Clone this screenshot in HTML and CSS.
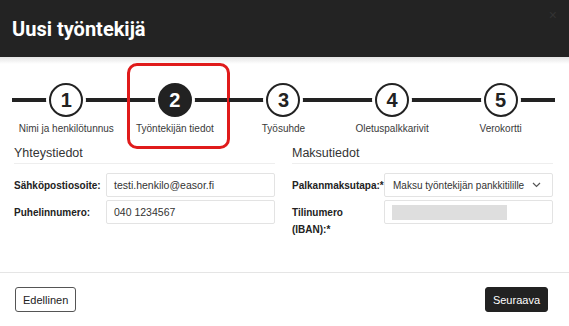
FILE: index.html
```html
<!DOCTYPE html>
<html lang="fi">
<head>
  <meta charset="UTF-8">
  <meta name="viewport" content="width=device-width, initial-scale=1.0">
  <title>Uusi työntekijä</title>
  <link rel="stylesheet" href="styles.css">
</head>
<body>
  <div class="modal">
    <div class="modal-header">
      <h2>Uusi työntekijä</h2>
      <span class="close">&times;</span>
    </div>

    <div class="modal-body">
      <ol class="stepper">
        <li class="step">
          <span class="circle">1</span>
          <span class="step-label">Nimi ja henkilötunnus</span>
        </li>
        <li class="step active">
          <span class="circle">2</span>
          <span class="step-label">Työntekijän tiedot</span>
        </li>
        <li class="step">
          <span class="circle">3</span>
          <span class="step-label">Työsuhde</span>
        </li>
        <li class="step">
          <span class="circle">4</span>
          <span class="step-label">Oletuspalkkarivit</span>
        </li>
        <li class="step">
          <span class="circle">5</span>
          <span class="step-label">Verokortti</span>
        </li>
      </ol>

      <div class="sections">
        <div class="section">
          <h3>Yhteystiedot</h3>
          <div class="row">
            <label>Sähköpostiosoite:</label>
            <div class="field">testi.henkilo@easor.fi</div>
          </div>
          <div class="row">
            <label>Puhelinnumero:</label>
            <div class="field">040 1234567</div>
          </div>
        </div>

        <div class="section">
          <h3>Maksutiedot</h3>
          <div class="row">
            <label>Palkanmaksutapa:*</label>
            <div class="field select">
              <span>Maksu työntekijän pankkitilille</span>
              <svg width="9" height="6" viewBox="0 0 9 6"><path d="M1 1l3.5 3.5L8 1" fill="none" stroke="#555" stroke-width="1.2"/></svg>
            </div>
          </div>
          <div class="row">
            <label>Tilinumero<br>(IBAN):*</label>
            <div class="field"><span class="hidden-value"></span></div>
          </div>
        </div>
      </div>
    </div>

    <div class="modal-footer">
      <button class="btn">Edellinen</button>
      <button class="btn btn-dark">Seuraava</button>
    </div>
  </div>
</body>
</html>
```

FILE: styles.css
```css
body {
  margin: 0;
  padding: 0;
  background: #fff;
  font-family: "Liberation Sans", Arial, sans-serif;
  color: #333;
}

.modal {
  width: 569px;
  height: 326px;
  overflow: hidden;
}

.modal-header {
  height: 57px;
  background: #232323;
  display: flex;
  align-items: center;
  justify-content: space-between;
  padding: 0 12px;
}

.modal-header h2 {
  margin: 0;
  margin-top: 1px;
  font-family: Roboto, sans-serif;
  font-weight: 700;
  font-size: 20px;
  color: #fff;
}

.modal-header .close {
  align-self: flex-start;
  margin-top: 7px;
  font-size: 14px;
  color: #333;
}

.modal-body {
  background: linear-gradient(#e4e4e4, #fff 7px);
  padding: 26px 14px 0 12px;
  height: 189px;
}

/* stepper */
.stepper {
  list-style: none;
  margin: 0;
  padding: 0;
  display: flex;
}

.step {
  position: relative;
  flex: 1;
  display: flex;
  flex-direction: column;
  align-items: center;
}

.step::before {
  content: "";
  position: absolute;
  left: 0;
  right: 0;
  top: 15px;
  height: 4px;
  background: #222;
}

.circle {
  position: relative;
  width: 30px;
  height: 30px;
  border: 2px solid #222;
  border-radius: 50%;
  background: #fff;
  box-shadow: 0 0 0 3px #fff;
  display: flex;
  align-items: center;
  justify-content: center;
  font-size: 20px;
  font-weight: bold;
  color: #222;
}

.step.active .circle {
  background: #222;
  color: #fff;
}

.step.active::after {
  content: "";
  position: absolute;
  left: 6px;
  right: -1px;
  top: -20px;
  bottom: -14px;
  border: 3px solid #e01b1b;
  border-radius: 10px;
}

.step-label {
  margin-top: 5px;
  font-size: 10px;
  line-height: 13px;
  color: #3a3a3a;
}

/* form sections */
.sections {
  display: grid;
  grid-template-columns: 261px 261px;
  column-gap: 17px;
  margin-left: 2px;
  margin-top: 9px;
}

.section h3 {
  margin: 0 0 9px;
  font-size: 12.5px;
  font-weight: normal;
  line-height: 19px;
  border-bottom: 1px solid #eee;
}

.row {
  display: flex;
  align-items: flex-start;
  margin-bottom: 3px;
}

.row label {
  width: 92px;
  flex-shrink: 0;
  font-size: 10px;
  font-weight: bold;
  line-height: 17px;
  padding-top: 4px;
  color: #222;
}

.field {
  flex: 1;
  height: 22px;
  border: 1px solid #e3e3e3;
  border-radius: 2px;
  padding: 0 7px;
  display: flex;
  align-items: center;
  font-size: 10.5px;
  color: #333;
}

.select {
  justify-content: space-between;
  padding-left: 8px;
  padding-right: 11px;
  font-size: 10px;
}

.hidden-value {
  width: 115px;
  height: 15px;
  background: #dedede;
  filter: blur(0.6px);
}

/* footer */
.modal-footer {
  border-top: 1px solid #e5e5e5;
  padding: 14px 21px 0 15px;
  display: flex;
  justify-content: space-between;
}

.btn {
  height: 25px;
  padding: 0 7px;
  font-family: "Liberation Sans", Arial, sans-serif;
  font-size: 11px;
  color: #222;
  background: #fff;
  border: 1px solid #555;
  border-radius: 3px;
}

.btn-dark {
  background: #222;
  color: #fff;
  border-color: #222;
}
```
